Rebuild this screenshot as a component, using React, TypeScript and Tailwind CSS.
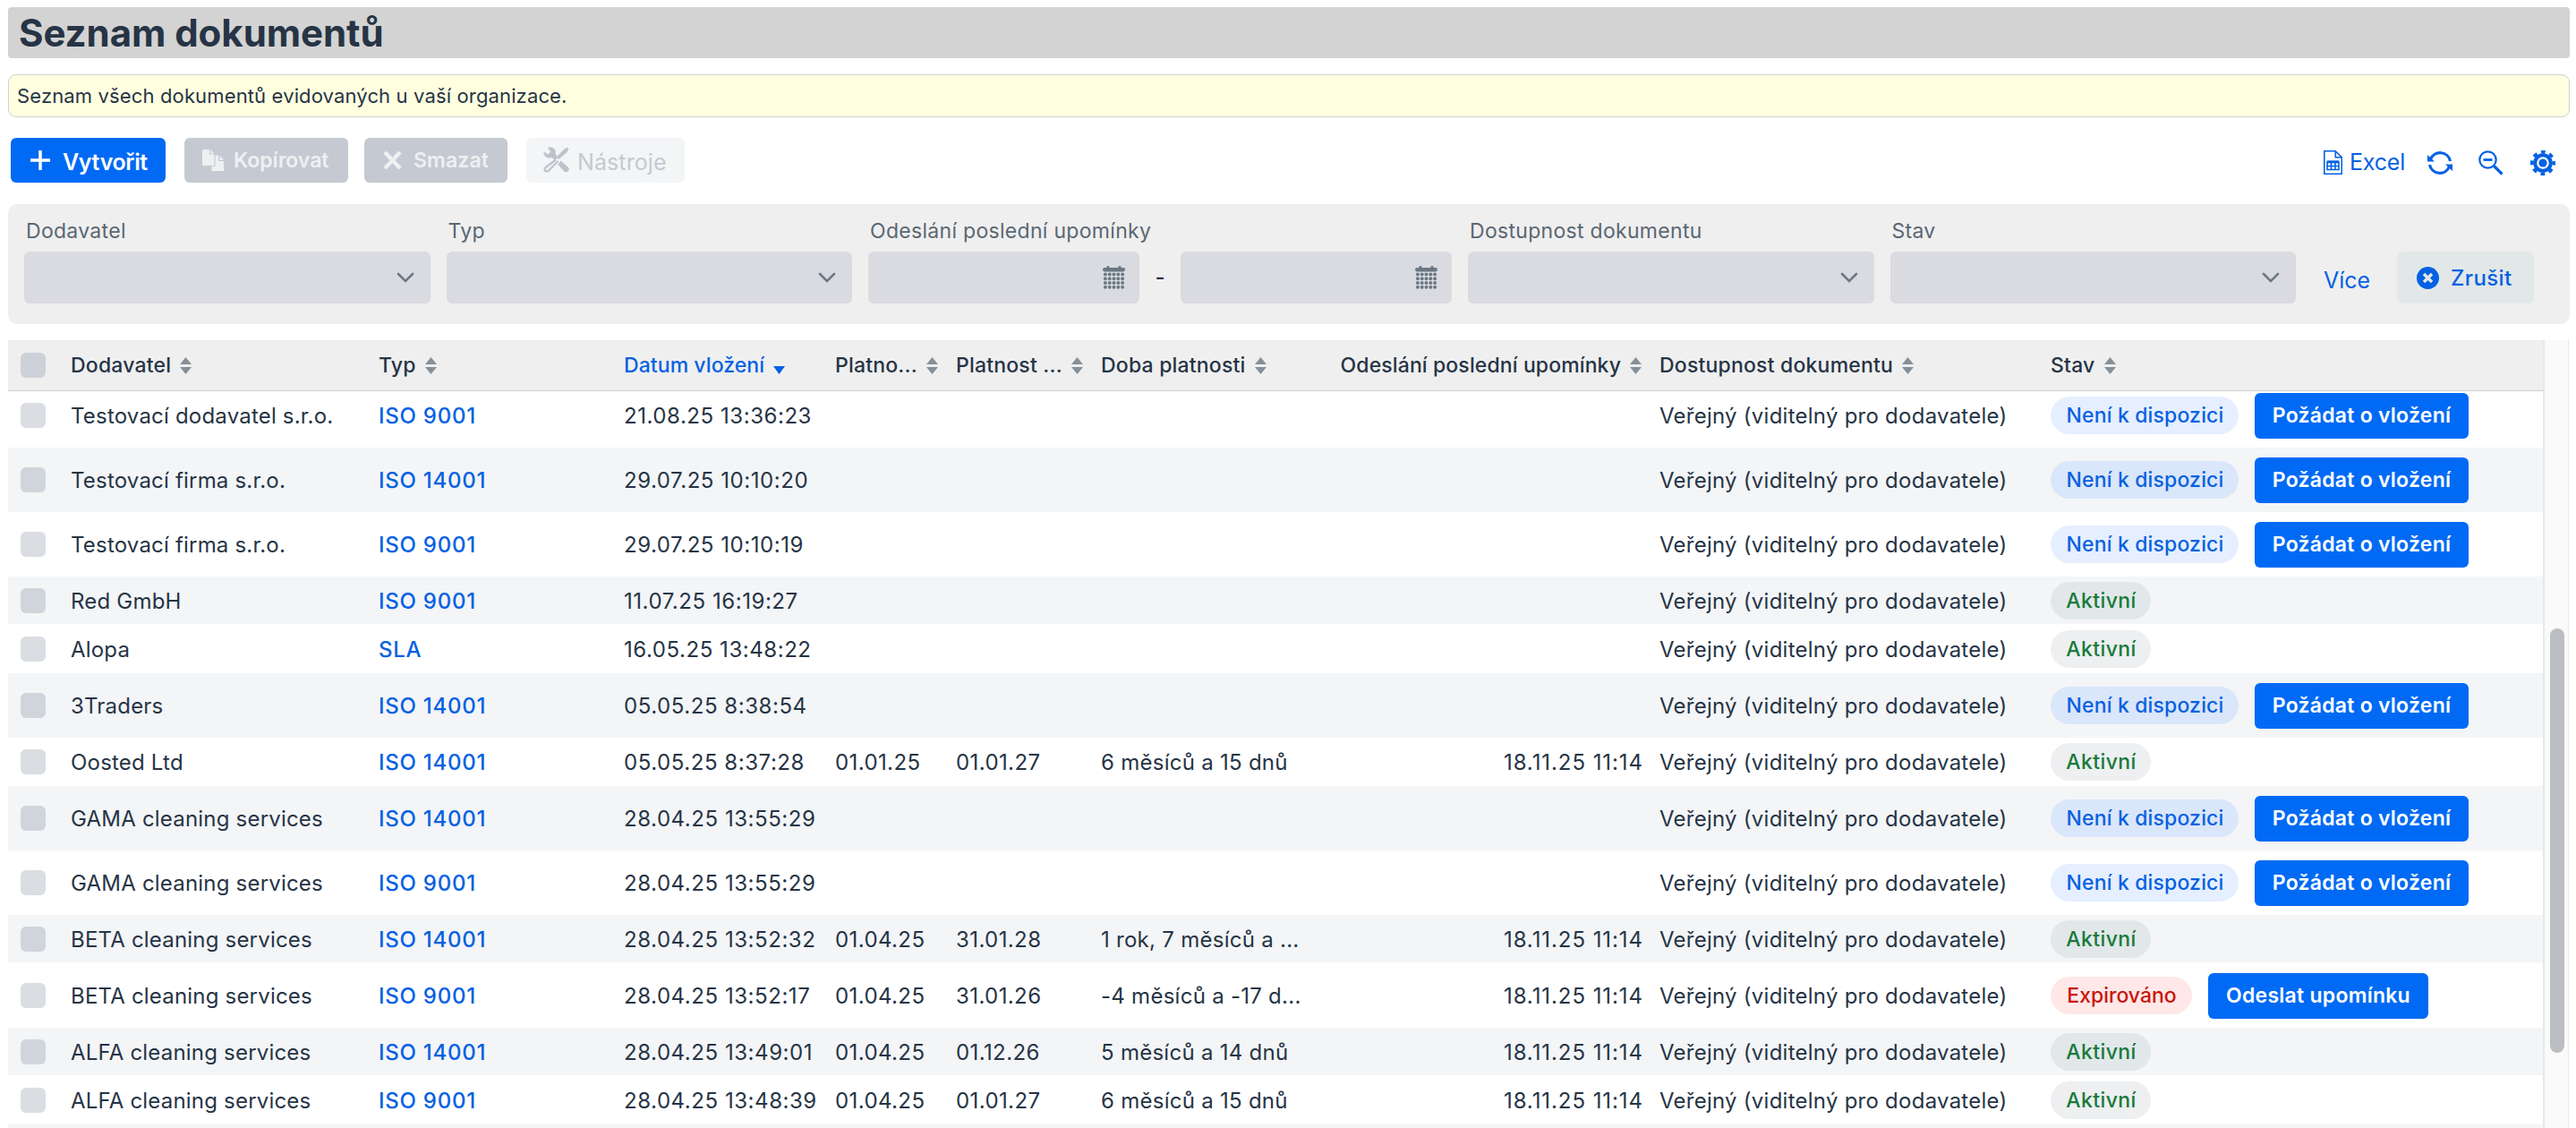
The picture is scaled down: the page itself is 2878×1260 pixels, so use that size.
import React from "react";

const ISO14 = "ISO 14001";
const ISO9 = "ISO 9001";

type Row = {
  supplier: string;
  type: string;
  date: string;
  from?: string;
  to?: string;
  period?: string;
  reminder?: string;
  state: "missing" | "active" | "expired";
};

const rows: Row[] = [
  { supplier: "Testovací dodavatel s.r.o.", type: ISO9, date: "21.08.25 13:36:23", state: "missing" },
  { supplier: "Testovací firma s.r.o.", type: ISO14, date: "29.07.25 10:10:20", state: "missing" },
  { supplier: "Testovací firma s.r.o.", type: ISO9, date: "29.07.25 10:10:19", state: "missing" },
  { supplier: "Red GmbH", type: ISO9, date: "11.07.25 16:19:27", state: "active" },
  { supplier: "Alopa", type: "SLA", date: "16.05.25 13:48:22", state: "active" },
  { supplier: "3Traders", type: ISO14, date: "05.05.25 8:38:54", state: "missing" },
  { supplier: "Oosted Ltd", type: ISO14, date: "05.05.25 8:37:28", from: "01.01.25", to: "01.01.27", period: "6 měsíců a 15 dnů", reminder: "18.11.25 11:14", state: "active" },
  { supplier: "GAMA cleaning services", type: ISO14, date: "28.04.25 13:55:29", state: "missing" },
  { supplier: "GAMA cleaning services", type: ISO9, date: "28.04.25 13:55:29", state: "missing" },
  { supplier: "BETA cleaning services", type: ISO14, date: "28.04.25 13:52:32", from: "01.04.25", to: "31.01.28", period: "1 rok, 7 měsíců a ...", reminder: "18.11.25 11:14", state: "active" },
  { supplier: "BETA cleaning services", type: ISO9, date: "28.04.25 13:52:17", from: "01.04.25", to: "31.01.26", period: "-4 měsíců a -17 d...", reminder: "18.11.25 11:14", state: "expired" },
  { supplier: "ALFA cleaning services", type: ISO14, date: "28.04.25 13:49:01", from: "01.04.25", to: "01.12.26", period: "5 měsíců a 14 dnů", reminder: "18.11.25 11:14", state: "active" },
  { supplier: "ALFA cleaning services", type: ISO9, date: "28.04.25 13:48:39", from: "01.04.25", to: "01.01.27", period: "6 měsíců a 15 dnů", reminder: "18.11.25 11:14", state: "active" },
];

const columns = "grid grid-cols-[70px_344px_274px_236px_135px_162px_229px_395px_437px_1fr]";

const SortIcon = () => (
  <svg width="13" height="19" viewBox="0 0 13 19" className="shrink-0 fill-[#869098]">
    <path d="M6.500 0 13 8H0zM0 11h13l-6.500 8z" />
  </svg>
);

const Chevron = () => (
  <svg width="20" height="13" viewBox="0 0 20 13" fill="none" stroke="#6b7883" strokeWidth="2.600">
    <path d="m2 2 8 8 8-8" strokeLinecap="round" />
  </svg>
);

const CalendarIcon = () => (
  <svg width="25" height="26" viewBox="0 0 25 26" fill="#6b7883">
    <path d="M0 4Q0 2 2 2h2.500V.5Q6 -.5 7.500.5V2h10V.5Q19 -.5 20.500.5V2H23q2 0 2 2t-2 2.500H2Q0 6 0 4z" />
    {[9.4, 14.2, 19, 23.8].map((y) =>
      [2.9, 7.7, 12.5, 17.3, 22.1].map((x) => <circle key={`${x}-${y}`} cx={x} cy={y} r="1.950" />)
    )}
  </svg>
);

const Select = ({ label }: { label: string }) => (
  <div className="w-[453.500px] shrink-0">
    <FilterLabel text={label} />
    <div className="flex h-[58px] items-center justify-end rounded-md bg-[#dadbe1] pr-[18px]">
      <Chevron />
    </div>
  </div>
);

const FilterLabel = ({ text }: { text: string }) => (
  <div className="flex h-[53px] items-center whitespace-nowrap pt-[8px] pl-[2px] text-[23px] tracking-[0.300px] text-[#5a6772]">
    {text}
  </div>
);

const DateInput = () => (
  <div className="flex h-[58px] w-[303px] items-center justify-end rounded-md bg-[#dadbe1] pr-[16px]">
    <CalendarIcon />
  </div>
);

const HeadCell = ({ text, className = "" }: { text: string; className?: string }) => (
  <div className={`flex items-center gap-[10px] whitespace-nowrap ${className}`}>
    <span>{text}</span>
    <SortIcon />
  </div>
);

const badges = {
  missing: { text: "Není k dispozici", size: "w-[210px] tracking-[0.150px]", color: "text-[#0561e2]", even: "bg-[#dae6fa]", odd: "bg-[#e5efff]" },
  active: { text: "Aktivní", size: "w-[112px] tracking-[0.400px]", color: "text-[#177a3c]", even: "bg-[#e2e8e9]", odd: "bg-[#edeff0]" },
  expired: { text: "Expirováno", size: "w-[158px]", color: "text-[#ca150c]", even: "bg-[#ffe8e7]", odd: "bg-[#ffe8e7]" },
};

const State = ({ state, even }: { state: Row["state"]; even: boolean }) => {
  const badge = badges[state];
  return (
    <div className="flex items-center gap-[18px] whitespace-nowrap font-medium">
      <span className={`flex h-[42px] items-center justify-center rounded-full pt-[1px] pl-[1px] text-[23px] ${badge.size} ${badge.color} ${even ? badge.even : badge.odd}`}>
        {badge.text}
      </span>
      {state === "missing" && (
        <button className="h-[51px] w-[239px] rounded-md bg-[#006af5] pt-[1px] text-[23px] font-semibold tracking-[0.250px] text-white">Požádat o vložení</button>
      )}
      {state === "expired" && (
        <button className="h-[51px] w-[246px] rounded-md bg-[#006af5] pt-[1px] text-[23px] font-semibold tracking-[0.250px] text-white">Odeslat upomínku</button>
      )}
    </div>
  );
};

const TableRow = ({ row, even }: { row: Row; even: boolean }) => (
  <div
    className={`${columns} shrink-0 items-center whitespace-nowrap border-white ${
      row.state === "active" ? "h-[54px]" : "h-[72px]"
    } ${even ? "bg-[#f3f5f7]" : "bg-white"} ${even && row.state === "active" ? "border-b" : ""}`}
  >
    <div className={`ml-[14px] size-[28px] rounded-md ${even ? "bg-[#d0d5db]" : "bg-[#dadde2]"}`} />
    <div className="pt-[2px] tracking-[0.200px]">{row.supplier}</div>
    <a href="#" className="pt-[2px] font-medium tracking-[0.750px] text-[#0561e2]">{row.type}</a>
    <div className="pt-[2px] tracking-[0.550px]">{row.date}</div>
    <div className="pt-[2px] tracking-[0.400px]">{row.from}</div>
    <div className="pt-[2px] tracking-[0.400px]">{row.to}</div>
    <div className="pt-[2px] tracking-[0.270px]">{row.period}</div>
    <div className="pt-[2px] pr-[18px] text-right tracking-[0.930px]">{row.reminder}</div>
    <div className="pt-[2px] tracking-[0.250px]">Veřejný (viditelný pro dodavatele)</div>
    <State state={row.state} even={even} />
  </div>
);

const Toolbar = () => (
  <div className="mt-[23px] flex h-[50px] items-center pl-[3px]">
    <button className="flex h-[50px] w-[173px] items-center rounded-md bg-[#006af5] pl-[22px] text-[25px] font-semibold tracking-[-0.350px] text-white">
      <svg width="22" height="22" viewBox="0 0 22 22" stroke="#fff" strokeWidth="3.500" className="-mt-[1px]">
        <path d="M11 0v22M0 11h22" />
      </svg>
      <span className="ml-[14px] pt-[5px]">Vytvořit</span>
    </button>
    <button className="ml-[21px] flex h-[50px] w-[183px] items-center rounded-md bg-[#c5c9d2] pl-[20px] text-[23px] font-semibold text-[#eef0f2]">
      <svg width="24" height="24" viewBox="0 0 24 24" fill="#eef0f2">
        <path d="M0 0h8v5.500h5.500V18H0zM9.200 0 13.500 4.500H9.200z" />
        <path d="M14.500 6.500H18V13h6v11H10.500v-5h4zM19.300 6.500 24 11.700h-4.700z" />
      </svg>
      <span className="ml-[11px]">Kopírovat</span>
    </button>
    <button className="ml-[18px] flex h-[50px] w-[160px] items-center rounded-md bg-[#c5c9d2] pl-[21px] text-[23px] font-semibold tracking-[0.150px] text-[#eef0f2]">
      <svg width="21" height="20" viewBox="0 0 21 20" stroke="#eef0f2" strokeWidth="4.500">
        <path d="m2 1 17 18M19 1 2 19" />
      </svg>
      <span className="ml-[13px]">Smazat</span>
    </button>
    <button className="ml-[21px] flex h-[50px] w-[177px] items-center rounded-md bg-[#f3f5f7] pl-[19px] text-[25px] text-[#c5c9d0]">
      <svg width="29" height="29" viewBox="0 0 29 29" fill="#bec3cb" className="-mt-[1px]">
        <path d="M5 1q5-2 8 2 1.500 2 .5 5l3 3.500-3.500 3.500L9.500 12q-4 1.500-7-1Q0 8.500.5 5L5 8.500l3-3z" />
        <path d="M19.500 15.500 28 23q1.500 2 0 4t-4 1l-8-8.500 1.500-1z" />
        <path d="m26.500.5 2 2-2.500 4L17 14l-2.500-2.500 8-8z" />
        <path d="M14 14.500 2.500 23q-2 3 0 4t3.500-.5L16.500 16" fill="none" stroke="#bec3cb" strokeWidth="2.200" />
      </svg>
      <span className="ml-[9px] pt-[6px] tracking-[0.100px]">Nástroje</span>
    </button>

    <div className="mr-[16px] ml-auto flex items-center pt-[5px] text-[#0561e2]">
      <svg width="21" height="27" viewBox="0 0 21 27" fill="none" stroke="currentColor" strokeWidth="1.600">
        <path d="M.8.8h12.500l7 7v18.400H.8zM13.300.8v7h7" />
        <path d="M4 13h13v8.500H4zM4 17.500h13M8.500 13v9M13 13v9" />
        <path d="M4 12.800h13" strokeWidth="3" />
      </svg>
      <span className="ml-[8px] w-[62px] pt-[1px] text-[25px] tracking-[-0.200px]">Excel</span>
      <svg width="28" height="28" viewBox="0 0 28 28" fill="none" stroke="currentColor" strokeWidth="3.200" className="ml-[25px]">
        <path d="M3.500 10a11.500 11.500 0 0 1 22 2M24.500 18a11.500 11.500 0 0 1-22-2" />
        <path d="M0 5v7.500h8zM28 23v-7.500h-8z" fill="currentColor" stroke="none" />
      </svg>
      <svg width="28" height="28" viewBox="0 0 28 28" fill="none" stroke="currentColor" strokeWidth="2.200" className="ml-[29px]">
        <circle cx="10.500" cy="10.500" r="9.200" />
        <path d="M5.500 10.500h10" strokeWidth="2.800" />
        <path d="m17.500 17.500 9 9" strokeWidth="3.200" />
      </svg>
      <svg width="28" height="28" viewBox="0 0 28 28" className="ml-[30px]">
        <g fill="none" stroke="currentColor">
          <circle cx="14" cy="14" r="8.800" strokeWidth="4" />
          <circle cx="14" cy="14" r="12.200" strokeWidth="3.600" strokeDasharray="4.790 4.790" strokeDashoffset="2.400" />
        </g>
        <circle cx="14" cy="14" r="4.600" fill="currentColor" />
      </svg>
    </div>
  </div>
);

const App: React.FC = () => {
  return (
    <div className="flex h-[1260px] w-[2878px] flex-col overflow-hidden bg-white pt-[8px] pr-[7px] pl-[9px] font-['Inter',sans-serif] text-[#263445]">
      <h1 className="flex h-[57px] shrink-0 items-center rounded bg-[#d3d3d3] pl-[12px] text-[42px] font-bold tracking-[-0.050px]">Seznam dokumentů</h1>
      <div className="mt-[18px] flex h-[48px] shrink-0 items-center rounded-[9px] border border-[#d0d0d0] bg-[#ffffe0] pl-[9px] text-[22px] tracking-[0.140px]">
        Seznam všech dokumentů evidovaných u vaší organizace.
      </div>
      <Toolbar />

      {/* Filters */}
      <div className="mt-[24px] flex h-[134px] shrink-0 gap-[18px] rounded-[10px] bg-[#efefef] pl-[18px]">
        <Select label="Dodavatel" />
        <Select label="Typ" />
        <div className="w-[652px] shrink-0">
          <FilterLabel text="Odeslání poslední upomínky" />
          <div className="flex items-center justify-between">
            <DateInput />
            <span className="text-[24px] font-medium">-</span>
            <DateInput />
          </div>
        </div>
        <Select label="Dostupnost dokumentu" />
        <Select label="Stav" />
        <div className="mt-[53px] flex h-[58px] items-center text-[#0561e2]">
          <a href="#" className="ml-[13px] w-[82px] pt-[8px] text-[25px]">Více</a>
          <button className="flex h-[58px] w-[153px] items-center rounded-md bg-[#e2e8e8] pl-[22px] text-[24px] font-medium">
            <svg width="25" height="25" viewBox="0 0 25 25">
              <circle cx="12.500" cy="12.500" r="12.500" fill="currentColor" />
              <path d="m8 8 9 9M17 8l-9 9" stroke="#e2e8e8" strokeWidth="3.500" />
            </svg>
            <span className="ml-[13px] pt-[1px] tracking-[0.400px]">Zrušit</span>
          </button>
        </div>
      </div>

      {/* Table */}
      <div className="mt-[18px] flex min-h-0 flex-1">
        <div className="flex w-[2832px] flex-col">
          <div className={`${columns} h-[57px] shrink-0 items-center border-b border-[#cdd2da] bg-[#efefef] text-[23px] font-medium tracking-[0.200px]`}>
            <div className="ml-[14px] size-[28px] rounded-md bg-[#cdd1d8]" />
            <HeadCell text="Dodavatel" />
            <HeadCell text="Typ" />
            <div className="flex items-center gap-[10px] whitespace-nowrap tracking-[0.080px] text-[#0561e2]">
              Datum vložení
              <svg width="13" height="9" viewBox="0 0 13 9" className="mt-[11px] fill-[#0561e2]">
                <path d="M0 0h13L6.500 9z" />
              </svg>
            </div>
            <HeadCell text="Platno..." className="justify-between pr-[20px]" />
            <HeadCell text="Platnost ..." className="justify-between pr-[20px]" />
            <HeadCell text="Doba platnosti" />
            <HeadCell text="Odeslání poslední upomínky" className="justify-end pr-[20px] tracking-[0.120px]" />
            <HeadCell text="Dostupnost dokumentu" />
            <HeadCell text="Stav" />
          </div>
          <div className="min-h-0 flex-1 overflow-hidden text-[24px]">
            {/* First row is scrolled slightly under the header */}
            <div className="-mt-[9px] flex flex-col">
              {rows.map((row, i) => (
                <TableRow key={i} row={row} even={i % 2 === 1} />
              ))}
              <div className="h-[54px] bg-[#f3f5f7]" />
            </div>
          </div>
        </div>
        <div className="w-[29px] border-r border-l-2 border-[#e6e8ea] bg-[#fafafa] pt-[322px] pl-[6px]">
          <div className="h-[474px] w-[16px] rounded-full bg-[#babec2]" />
        </div>
      </div>
    </div>
  );
};

export default App;
